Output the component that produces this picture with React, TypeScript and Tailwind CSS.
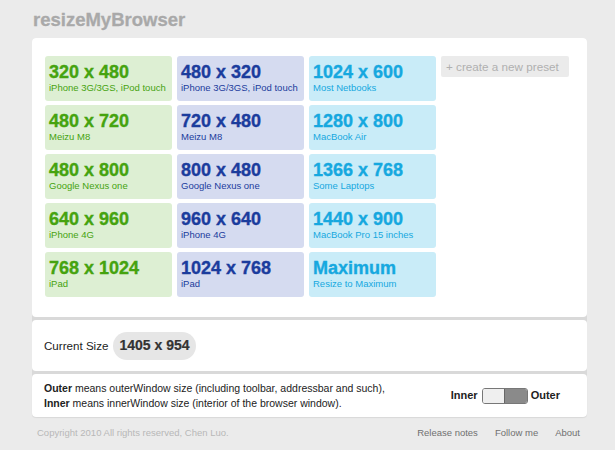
import React from "react";

type Preset = { size: string; label: string };

const green: Preset[] = [
  { size: "320 x 480", label: "iPhone 3G/3GS, iPod touch" },
  { size: "480 x 720", label: "Meizu M8" },
  { size: "480 x 800", label: "Google Nexus one" },
  { size: "640 x 960", label: "iPhone 4G" },
  { size: "768 x 1024", label: "iPad" },
];
const blue: Preset[] = [
  { size: "480 x 320", label: "iPhone 3G/3GS, iPod touch" },
  { size: "720 x 480", label: "Meizu M8" },
  { size: "800 x 480", label: "Google Nexus one" },
  { size: "960 x 640", label: "iPhone 4G" },
  { size: "1024 x 768", label: "iPad" },
];
const cyan: Preset[] = [
  { size: "1024 x 600", label: "Most Netbooks" },
  { size: "1280 x 800", label: "MacBook Air" },
  { size: "1366 x 768", label: "Some Laptops" },
  { size: "1440 x 900", label: "MacBook Pro 15 inches" },
  { size: "Maximum", label: "Resize to Maximum" },
];

function Card({ p, kind }: { p: Preset; kind: "g" | "b" | "c" }) {
  const bg =
    kind === "g" ? "bg-[#ddefd3]" : kind === "b" ? "bg-[#d5dbf0]" : "bg-[#c9ecf8]";
  const fg =
    kind === "g" ? "text-[#45a30f]" : kind === "b" ? "text-[#1b3c9d]" : "text-[#16a8df]";
  return (
    <div className={`h-[45px] rounded-[3px] pl-[4px] pt-[6px] ${bg} ${fg}`}>
      <div className="text-[18px] font-bold leading-[20px] [-webkit-text-stroke:0.35px]">{p.size}</div>
      <div className="text-[9.5px] leading-[12px]">{p.label}</div>
    </div>
  );
}

export default function App() {
  return (
    <div
      className="min-h-[450px] w-[615px] bg-[#ebebeb] text-[#222]"
      style={{ fontFamily: '"Liberation Sans", Arial, sans-serif' }}
    >
      <div className="ml-[32px] w-[555px]">
        <div className="pl-[1px] pt-[9px] pb-[7px] text-[18.5px] font-bold leading-[22px] text-[#a9a9a9] [-webkit-text-stroke:0.3px]">
          resizeMyBrowser
        </div>
        <div className="flex flex-col gap-[3px] rounded-[4px] bg-[#d9d9d9]">
          <div className="rounded-[4px] bg-white pl-[13px] pt-[18px] pb-[20px]">
            <div className="grid grid-cols-[127px_127px_127px_128px] gap-x-[5px]">
              <div className="flex flex-col gap-[4px]">
                {green.map((p) => (
                  <Card key={p.size} p={p} kind="g" />
                ))}
              </div>
              <div className="flex flex-col gap-[4px]">
                {blue.map((p) => (
                  <Card key={p.size} p={p} kind="b" />
                ))}
              </div>
              <div className="flex flex-col gap-[4px]">
                {cyan.map((p) => (
                  <Card key={p.size} p={p} kind="c" />
                ))}
              </div>
              <div>
                <div className="flex h-[21px] items-center rounded-[2px] bg-[#ebebeb] pl-[5px] text-[11.7px] text-[#b0b0b0]">
                  + create a new preset
                </div>
              </div>
            </div>
          </div>
          <div className="flex h-[51px] items-center rounded-[4px] bg-white pl-[12px]">
            <span className="text-[11.6px]">Current Size</span>
            <span className="ml-[5px] flex h-[28px] items-center rounded-full bg-[#e6e6e6] px-[6px] text-[14px] font-bold text-[#333] [-webkit-text-stroke:0.2px]">
              1405 x 954
            </span>
          </div>
          <div className="flex h-[43px] items-center justify-between rounded-[4px] bg-white pl-[12px] pr-[27px] shadow-[0_1px_1px_rgba(0,0,0,0.08)]">
            <div className="text-[10.5px] leading-[15px]">
              <div>
                <b>Outer</b> means outerWindow size (including toolbar, addressbar and such),
              </div>
              <div>
                <b>Inner</b> means innerWindow size (interior of the browser window).
              </div>
            </div>
            <div className="flex items-center text-[11px] font-bold">
              <span>Inner</span>
              <div className="ml-[4px] mr-[3px] flex h-[16px] w-[46px] overflow-hidden rounded-[3px] border border-[#777]">
                <div className="w-[21px] bg-[#efefef]" />
                <div className="flex-1 border-l border-[#666] bg-[#8a8a8a]" />
              </div>
              <span>Outer</span>
            </div>
          </div>
        </div>
        <div className="flex items-center justify-between pl-[5px] pr-[7px] pt-[9px] text-[9.5px]">
          <span className="text-[#b8b8b8]">Copyright 2010 All rights reserved, Chen Luo.</span>
          <div className="flex gap-[17px] text-[#707070]">
            <span>Release notes</span>
            <span>Follow me</span>
            <span>About</span>
          </div>
        </div>
      </div>
    </div>
  );
}
